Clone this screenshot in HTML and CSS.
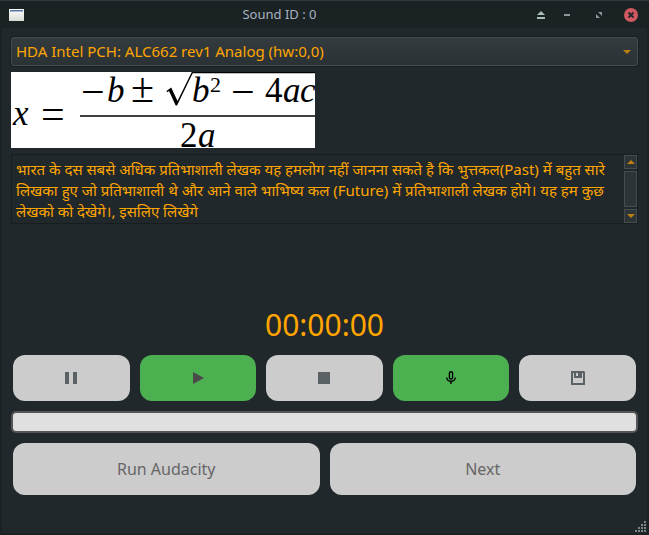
FILE: index.html
```html
<!DOCTYPE html>
<html lang="en">
<head>
<meta charset="utf-8">
<meta name="viewport" content="width=device-width, initial-scale=1">
<title>Sound ID : 0</title>
<link rel="stylesheet" href="styles.css">
</head>
<body>
<header class="titlebar">
  <svg class="app-icon" width="16" height="12" viewBox="0 0 16 12" aria-hidden="true">
    <defs><linearGradient id="paper" x2="0" y2="1"><stop offset="0" stop-color="#fff"/><stop offset="1" stop-color="#d9dcd5"/></linearGradient></defs>
    <path fill="url(#paper)" d="M0 0h15v12H0z"/><path fill="#5674a8" d="M1 1h13v1H1z"/><path fill="#a9bbd8" d="M1 2h13v1H1z"/>
  </svg>
  <h1 class="title">Sound ID : 0</h1>
  <button class="control" type="button" aria-label="Keep above"><svg width="14" height="14" viewBox="0 0 14 14"><path fill="#a9bdbb" d="M7 3l4 4H3zM3 9h8v2H3z"/></svg></button>
  <div class="window-controls">
    <button class="control" type="button" aria-label="Minimize"><svg width="14" height="14" viewBox="0 0 14 14"><path fill="#8b979b" d="M4 6h6v2H4z"/></svg></button>
    <button class="control" type="button" aria-label="Maximize"><svg width="14" height="14" viewBox="0 0 14 14"><path fill="#8b979b" d="M6 4h4v4zM4 6l4 4H4z"/></svg></button>
    <button class="control" type="button" aria-label="Close"><svg width="14" height="14" viewBox="0 0 14 14"><circle cx="7" cy="7" r="7" fill="#d15861"/><path d="M4.500 4.500l5 5m0-5l-5 5" stroke="#20282b" stroke-width="1.800"/></svg></button>
  </div>
</header>
<main class="content">
  <div class="device">
    <select class="device-select" aria-label="Input device"><option>HDA Intel PCH: ALC662 rev1 Analog (hw:0,0)</option></select>
    <svg class="device-arrow" width="8" height="4" viewBox="0 0 8 4" aria-hidden="true"><path fill="#bd7f12" d="M0 0h8L4 4z"/></svg>
  </div>
  <svg class="formula" width="304" height="76" viewBox="0 0 304 76" role="img" aria-label="Quadratic formula">
    <path fill="#fff" d="M0 0h304v76H0z"/>
    <g class="math">
      <text class="var" x="2" y="53">x</text>
      <text x="30" y="56" class="op">=</text>
      <text x="70" y="34" class="op">−</text>
      <text class="var" x="96" y="30">b</text>
      <text x="120" y="30" class="op">±</text>
      <text class="var" x="181" y="30">b</text>
      <text class="power" x="199" y="20">2</text>
      <text x="220" y="34" class="op">−</text>
      <text x="254" y="30">4</text>
      <text class="var" x="272" y="30">a</text>
      <text class="var" x="289" y="30">c</text>
      <text x="169" y="75">2</text>
      <text class="var" x="187" y="75">a</text>
    </g>
    <path d="M69 44h235" stroke="#000" stroke-width="1.500"/>
    <path d="M181 .5h123" stroke="#000" stroke-width="1.500"/>
    <path d="M155.500 19l4.700-3.500 6.300 13.500L180.800 0h1.500L166 33.500h-1.300L158 19l-2 1.300z"/>
  </svg>
  <div class="prompt">
    <textarea class="prompt-text" lang="hi" aria-label="Prompt" readonly>भारत के दस सबसे अधिक प्रतिभाशाली लेखक यह हमलोग नहीं जानना सकते है कि भुत्तकल(Past) में बहुत सारे लिखका हुए जो प्रतिभाशाली थे और आने वाले भाभिष्य कल (Future) में प्रतिभाशाली लेखक होगे। यह हम कुछ लेखको को देखेगे।, इसलिए लिखेगे</textarea>
    <div class="scrollbar">
      <button class="scroll-step" type="button" aria-label="Scroll up"><svg width="8" height="4" viewBox="0 0 8 4"><path fill="#bd7f12" d="M4 0l4 4H0z"/></svg></button>
      <div class="scroll-thumb"></div>
      <button class="scroll-step" type="button" aria-label="Scroll down"><svg width="8" height="4" viewBox="0 0 8 4"><path fill="#bd7f12" d="M0 0h8L4 4z"/></svg></button>
    </div>
  </div>
  <div class="timer">00:00:00</div>
  <div class="transport">
    <button class="button" type="button" aria-label="Pause"><svg width="16" height="16" viewBox="0 0 16 16"><path fill="#5a6265" d="M2 2h4v12H2zM10 2h4v12h-4z"/></svg></button>
    <button class="button active" type="button" aria-label="Play"><svg width="16" height="16" viewBox="0 0 16 16"><path fill="#4a4a4a" d="M3 2l11 6-11 6z"/></svg></button>
    <button class="button" type="button" aria-label="Stop"><svg width="16" height="16" viewBox="0 0 16 16"><path fill="#5a6265" d="M2 2h12v12H2z"/></svg></button>
    <button class="button active" type="button" aria-label="Record"><svg width="16" height="16" viewBox="0 0 16 16" fill="none" stroke="#000" stroke-width="1.400"><rect x="6.400" y="1.700" width="3.200" height="7.300" rx="1.600"/><path d="M3.700 7.500a4.300 3.800 0 0 0 8.600 0M8 11.300V14"/></svg></button>
    <button class="button" type="button" aria-label="Save"><svg width="16" height="16" viewBox="0 0 16 16"><path fill="#5a6265" fill-rule="evenodd" d="M1 1h13l1 1v13H1zM3 3v10h10V3h-1v5H4V3zM6 3v3h2V3z"/></svg></button>
  </div>
  <progress class="level" max="100" value="0" aria-label="Level"></progress>
  <div class="actions">
    <button class="button large" type="button">Run Audacity</button>
    <button class="button large" type="button">Next</button>
  </div>
  <svg class="grip" width="12" height="12" viewBox="0 0 12 12" aria-hidden="true"><path fill="#7b8487" d="M9 0h2v2H9zM6 3h2v2H6zM9 3h2v2H9zM3 6h2v2H3zM6 6h2v2H6zM9 6h2v2H9zM0 9h2v2H0zM3 9h2v2H3zM6 9h2v2H6zM9 9h2v2H9z"/></svg>
</main>
</body>
</html>
```
FILE: styles.css
```css
* { box-sizing: border-box; }

body {
  margin: 0;
  min-height: 100vh;
  display: flex;
  flex-direction: column;
  background: #1b2224;
  border-top: 1px solid #30393c;
  padding: 0 2px 2px;
  font: 15px/21px "Noto Sans", "Open Sans", sans-serif;
  color: #ffa500;
}

button, select, textarea { font: inherit; color: inherit; }
button { display: flex; align-items: center; justify-content: center; padding: 0; border: 0; background: none; }
svg { flex: none; display: block; }

.titlebar {
  display: flex;
  align-items: center;
  gap: 12px;
  height: 27px;
  padding: 0 9px 0 7px;
}
.title { flex: 1; margin: 0; font-size: 13px; font-weight: 400; text-align: center; color: #a8b2c0; }
.window-controls { display: flex; gap: 18px; }
.control { width: 14px; height: 14px; }

.content {
  position: relative;
  flex: 1;
  display: flex;
  flex-direction: column;
  padding: 9px;
  background: #20282b;
}

.device { display: grid; align-items: center; height: 29px; margin-bottom: 6px; }
.device-select, .device-arrow { grid-area: 1 / 1; }
.device-select {
  appearance: none;
  width: 100%;
  height: 29px;
  padding: 0 24px 0 4px;
  border: 1px solid #454d50;
  border-radius: 3px;
  background: linear-gradient(#333b3e, #2a3235);
  box-shadow: 0 0 0 1px #191f21;
}
.device-arrow { justify-self: end; margin-right: 7px; }

.formula { margin-bottom: 6px; }
.math { font-family: "Liberation Serif", serif; font-size: 35px; fill: #000; }
.math .var { font-style: italic; }
.math .op { font-size: 42px; }
.math .power { font-size: 22px; }

.prompt { display: flex; height: 70px; border: 1px solid #181e20; }
.prompt-text {
  flex: 1;
  min-width: 0;
  margin: 0;
  padding: 4px;
  border: 0;
  background: none;
  resize: none;
  overflow: hidden;
}
.scrollbar { display: flex; flex-direction: column; gap: 2px; width: 13px; }
.scroll-step { height: 14px; border: 1px solid #454d50; background: #2c3437; }
.scroll-thumb { flex: 1; border: 1px solid #454d50; background: #2c3437; }

.timer { flex: 1; display: flex; align-items: flex-end; justify-content: center; font-size: 30px; line-height: 40px; padding-bottom: 10px; }

.transport, .actions { display: flex; gap: 10px; padding: 0 2px; }
.button { flex: 1; height: 46px; border-radius: 12px; background: #ccc; color: #666; }
.button.active { background: #4caf50; }
.button.large { height: 52px; font-size: 16px; }

.level {
  appearance: none;
  width: 100%;
  height: 22px;
  margin: 10px 0;
  border: 2px solid #555;
  border-radius: 5px;
  background: #e0e0e0;
  overflow: hidden;
}
.level::-webkit-progress-bar { background: #e0e0e0; }
.level::-webkit-progress-value { background: #4caf50; }

.actions { margin-bottom: 29px; }
.grip { position: absolute; right: 0; bottom: 0; }
```
